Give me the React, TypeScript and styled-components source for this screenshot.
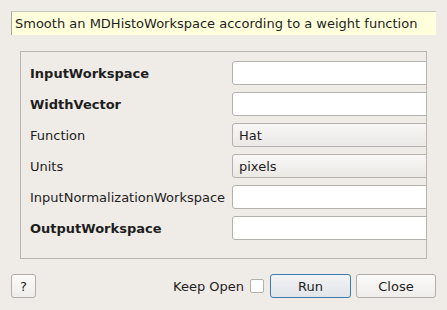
import React from "react";
import styled, { createGlobalStyle } from "styled-components";

const Global = createGlobalStyle`
  html, body { margin: 0; padding: 0; background: #efebe7; }
  body { font-family: "DejaVu Sans", "Liberation Sans", sans-serif; font-size: 13px; color: #1e1e1e; }
  * { box-sizing: border-box; }
`;

const Page = styled.div`
  width: 447px;
  height: 310px;
  padding: 11px 11px 0 11px;
  background: #efebe7;
  display: flex;
  flex-direction: column;
  overflow: hidden;
`;

const Description = styled.div`
  height: 24px;
  background: #ffffdc;
  border-left: 1px solid #a9a69f;
  border-top: 1px solid #c9c6bf;
  padding: 0 3px;
  display: flex;
  align-items: center;
  white-space: nowrap;
`;

const Group = styled.div`
  margin: 16px 9px 0 9px;
  height: 208px;
  border: 1px solid #b8b4af;
  overflow: hidden;
  padding: 9px 0 0 9px;
`;

const Grid = styled.div`
  display: grid;
  grid-template-columns: 202px 230px;
  row-gap: 7px;
  grid-auto-rows: 24px;
`;

const Label = styled.div<{ $bold?: boolean }>`
  display: flex;
  align-items: center;
  font-weight: ${(p) => (p.$bold ? "bold" : "normal")};
  white-space: nowrap;
`;

const TextInput = styled.div`
  height: 24px;
  background: #ffffff;
  border: 1px solid #b5b1ac;
  border-radius: 3px;
`;

const Combo = styled.div`
  height: 24px;
  background: linear-gradient(#f8f7f6, #ebe9e6);
  border: 1px solid #b5b1ac;
  border-radius: 3px;
  display: flex;
  align-items: center;
  padding-left: 6px;
`;

const ButtonRow = styled.div`
  margin-top: 15px;
  height: 24px;
  display: flex;
  align-items: center;
`;

const Actions = styled.div`
  display: flex;
  align-items: center;
  gap: 5px;
`;

const Button = styled.button<{ $w: number; $default?: boolean }>`
  width: ${(p) => p.$w}px;
  height: 24px;
  font-family: "DejaVu Sans", "Liberation Sans", sans-serif;
  font-size: 13px;
  color: #1e1e1e;
  border-radius: 3px;
  border: 1px solid ${(p) => (p.$default ? "#3b7bab" : "#b3afaa")};
  background: ${(p) =>
    p.$default ? "linear-gradient(#f1f3f5, #e2e5e8)" : "linear-gradient(#fbfbfa, #efedeb)"};
  padding: 0;
  display: flex;
  align-items: center;
  justify-content: center;
`;

const Spacer = styled.div`
  flex: 1;
`;

const KeepLabel = styled.span`
  margin-right: 6px;
`;

const Check = styled.div`
  width: 14px;
  height: 14px;
  background: #ffffff;
  border: 1px solid #b3afaa;
  border-radius: 2px;
  margin-right: 6px;
`;

const rows: { label: string; bold?: boolean; combo?: string }[] = [
  { label: "InputWorkspace", bold: true },
  { label: "WidthVector", bold: true },
  { label: "Function", combo: "Hat" },
  { label: "Units", combo: "pixels" },
  { label: "InputNormalizationWorkspace" },
  { label: "OutputWorkspace", bold: true },
];

export default function App() {
  return (
    <>
      <Global />
      <Page>
        <Description>Smooth an MDHistoWorkspace according to a weight function</Description>
        <Group>
          <Grid>
            {rows.map((r) => (
              <React.Fragment key={r.label}>
                <Label $bold={r.bold}>{r.label}</Label>
                {r.combo ? <Combo>{r.combo}</Combo> : <TextInput />}
              </React.Fragment>
            ))}
          </Grid>
        </Group>
        <ButtonRow>
          <Button $w={25}>?</Button>
          <Spacer />
          <KeepLabel>Keep Open</KeepLabel>
          <Check />
          <Actions>
            <Button $w={81} $default>Run</Button>
            <Button $w={80}>Close</Button>
          </Actions>
        </ButtonRow>
      </Page>
    </>
  );
}
